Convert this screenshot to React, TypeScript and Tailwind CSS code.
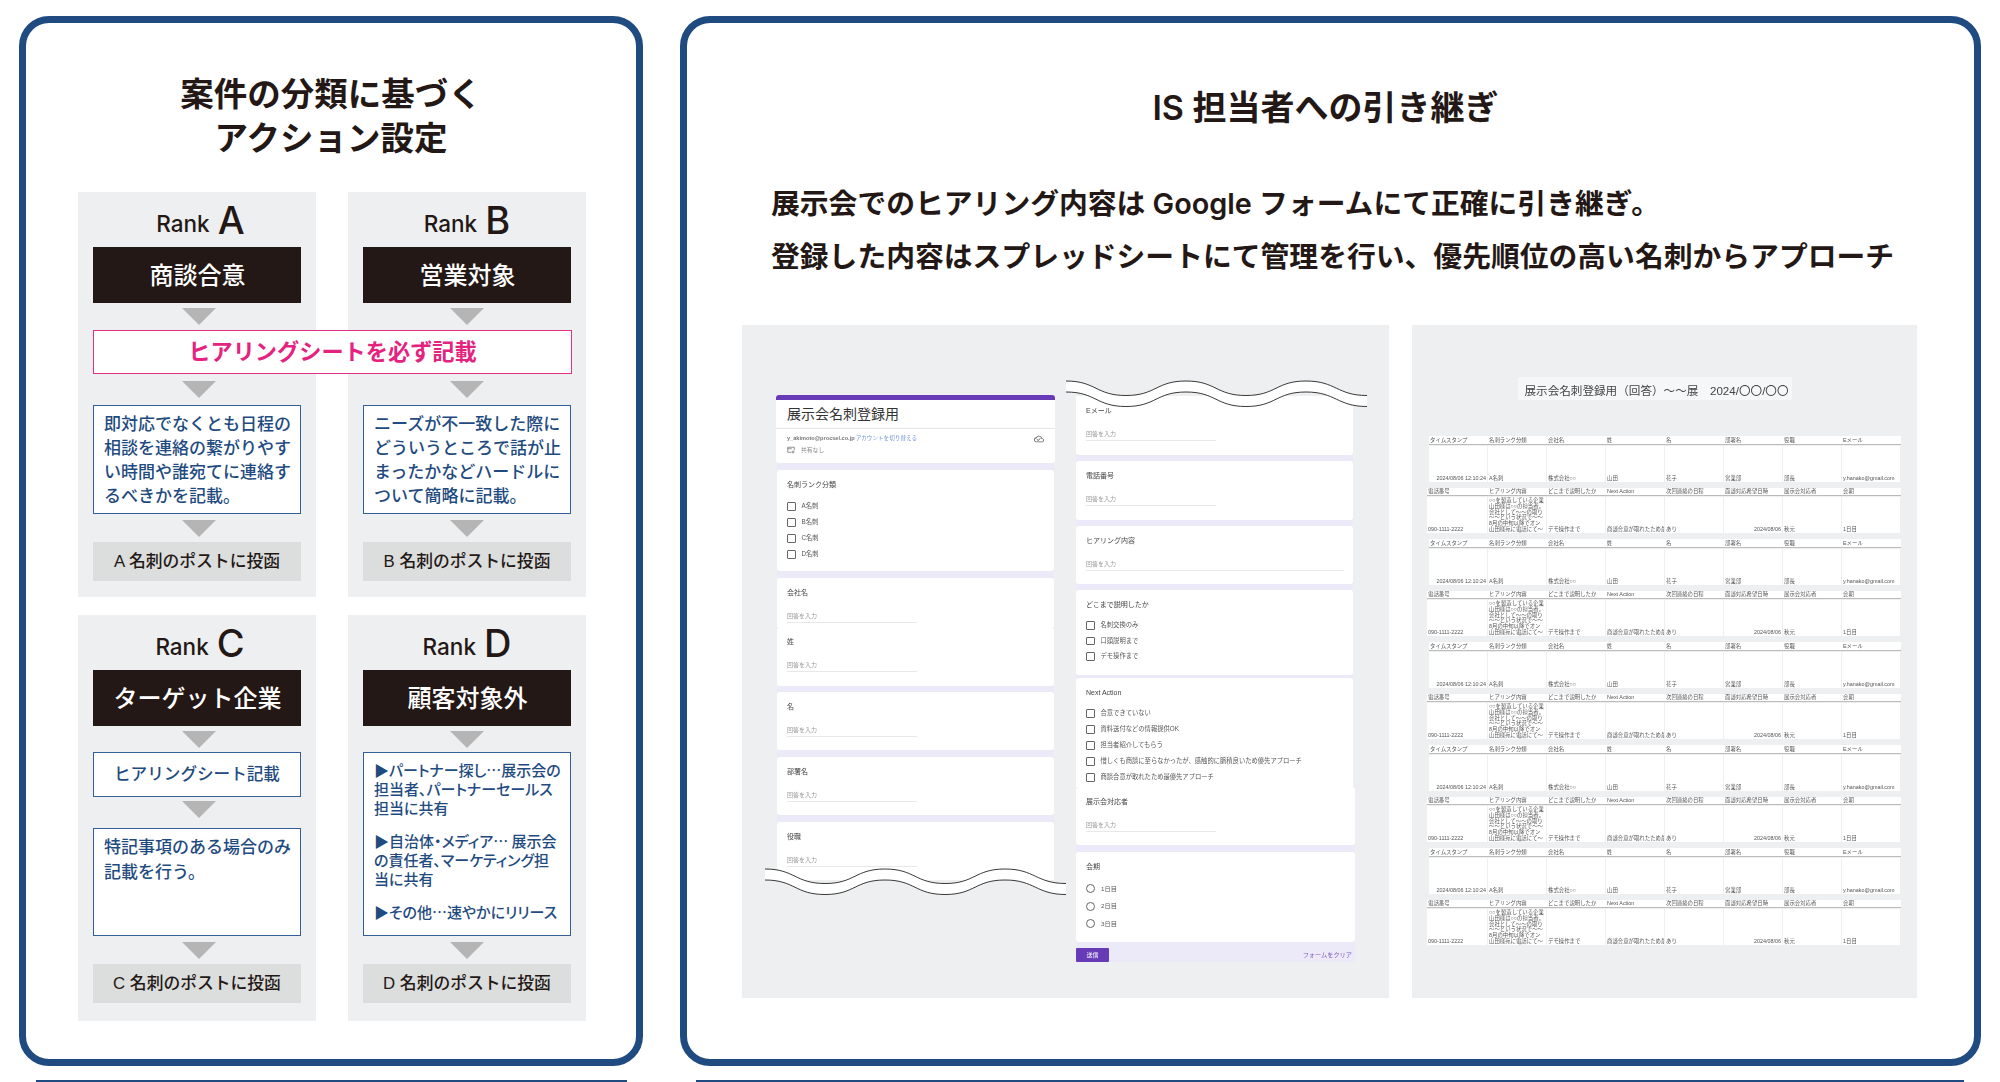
import React from "react"

const FONT = "font-['Liberation_Sans','Noto_Sans_CJK_JP',sans-serif]"

const Arrow = ({ className }: { className: string }) => (
  <div className={`flex justify-center ${className}`}>
    <div className="w-0 h-0 border-x-[17px] border-x-transparent border-t-[17px] border-t-[#b5b5b6]" />
  </div>
)

const RankLabel = ({ rank, className }: { rank: string; className: string }) => (
  <div className={`h-[55px] pt-[6px] flex items-baseline justify-center text-[#231815] font-medium font-['Inter',sans-serif] ${className}`}>
    <span className="text-[22.5px] leading-[44px] -translate-y-[2.5px]">Rank</span>
    <span className="text-[38px] leading-[44px] ml-[8px]">{rank}</span>
  </div>
)

const BlackBox = ({ children }: { children: React.ReactNode }) => (
  <div className="h-[56px] pt-[1px] pl-[1px] bg-[#231815] text-white text-[24px] font-medium flex items-center justify-center">
    {children}
  </div>
)

const GrayBox = ({ children }: { children: React.ReactNode }) => (
  <div className="h-[39px] bg-[#dcdddd] text-[#231815] text-[16.8px] font-medium flex items-center justify-center">
    {children}
  </div>
)

const BlueBox = ({ className, children }: { className: string; children: React.ReactNode }) => (
  <div className={`border-[1.5px] border-[#33609b] bg-white text-[#1f4b80] font-medium whitespace-nowrap ${className}`}>
    {children}
  </div>
)

const LeftCard = () => (
  <div className="w-[624px] h-[1050px] border-[7px] border-[#1f4b80] rounded-[30px] bg-white">
    <h2 className="pt-[50px] text-center text-[33.5px] leading-[44px] font-semibold text-[#231815]">
      案件の分類に基づく
      <br />
      アクション設定
    </h2>
    <div className="mt-[31px] ml-[52px] grid grid-cols-[238px_238px] grid-rows-[405px_406px] gap-x-[32px] gap-y-[18px]">
      <div className="bg-[#eeeff0] px-[15px]">
        <RankLabel rank="A" className="pl-[7px]" />
        <BlackBox>商談合意</BlackBox>
        <Arrow className="mt-[5px] pl-[4px]" />
        <div className="relative z-10 mt-[5px] w-[479px] h-[44px] pt-[1px] border-[1.5px] border-[#e0308a] bg-white text-[#e4237f] text-[22.2px] font-bold flex items-center justify-center">
          ヒアリングシートを必ず記載
        </div>
        <Arrow className="mt-[7px] pl-[4px]" />
        <BlueBox className="mt-[7px] h-[109px] px-[10px] pt-[6.5px] text-[17px] leading-[24px]">
          即対応でなくとも日程の
          <br />
          相談を連絡の繋がりやす
          <br />
          い時間や誰宛てに連絡す
          <br />
          るべきかを記載。
        </BlueBox>
        <Arrow className="mt-[6px] pl-[4px]" />
        <div className="mt-[5px]">
          <GrayBox>A 名刺のポストに投函</GrayBox>
        </div>
      </div>

      <div className="bg-[#eeeff0] px-[15px]">
        <RankLabel rank="B" className="" />
        <BlackBox>営業対象</BlackBox>
        <Arrow className="mt-[5px]" />
        <div className="mt-[5px] h-[44px]" />
        <Arrow className="mt-[7px]" />
        <BlueBox className="mt-[7px] h-[109px] px-[10px] pt-[6.5px] text-[17px] leading-[24px]">
          ニーズが不一致した際に
          <br />
          どういうところで話が止
          <br />
          まったかなどハードルに
          <br />
          ついて簡略に記載。
        </BlueBox>
        <Arrow className="mt-[6px]" />
        <div className="mt-[5px]">
          <GrayBox>B 名刺のポストに投函</GrayBox>
        </div>
      </div>

      <div className="bg-[#eeeff0] px-[15px]">
        <RankLabel rank="C" className="pl-[6px]" />
        <BlackBox>ターゲット企業</BlackBox>
        <Arrow className="mt-[5px] pl-[4px]" />
        <BlueBox className="mt-[4px] h-[45px] pt-[1px] flex items-center justify-center text-[16.6px]">ヒアリングシート記載</BlueBox>
        <Arrow className="mt-[4px] pl-[4px]" />
        <BlueBox className="mt-[10px] h-[108px] px-[10px] pt-[5.5px] text-[17px] leading-[25px]">
          特記事項のある場合のみ
          <br />
          記載を行う。
        </BlueBox>
        <Arrow className="mt-[6px] pl-[4px]" />
        <div className="mt-[5px]">
          <GrayBox>C 名刺のポストに投函</GrayBox>
        </div>
      </div>

      <div className="bg-[#eeeff0] px-[15px]">
        <RankLabel rank="D" className="" />
        <BlackBox>顧客対象外</BlackBox>
        <Arrow className="mt-[5px]" />
        <BlueBox className="mt-[4px] h-[184px] px-[10px] pt-[6.5px] text-[15px] leading-[19.3px] font-['Noto_Sans_CJK_JP',sans-serif] [font-feature-settings:'palt']">
          ▶パートナー探し…展示会の
          <br />
          担当者、パートナーセールス
          <br />
          担当に共有
          <div className="mt-[13.5px]">
            ▶自治体・メディア… 展示会
            <br />
            の責任者、マーケティング担
            <br />
            当に共有
          </div>
          <div className="mt-[13.5px]">▶その他…速やかにリリース</div>
        </BlueBox>
        <Arrow className="mt-[6px]" />
        <div className="mt-[5px]">
          <GrayBox>D 名刺のポストに投函</GrayBox>
        </div>
      </div>
    </div>
  </div>
)

const Wave = ({ className }: { className: string }) => (
  <svg className={`absolute ${className}`} width="301" height="28" viewBox="0 0 301 28" fill="none">
    <path
      d="M0 1C30 1 30 15.5 60 15.5S90 1 120 1s30 14.5 60 14.5S210 1 240 1s31 14.5 61 14.5V26.5C271 26.5 270 12 240 12s-30 14.5-60 14.5S150 12 120 12 90 26.5 60 26.5 30 12 0 12Z"
      fill="#ffffff"
      stroke="none"
    />
    <path d="M0 1C30 1 30 15.5 60 15.5S90 1 120 1s30 14.5 60 14.5S210 1 240 1s31 14.5 61 14.5" stroke="#222" strokeWidth="0.9" />
    <path d="M0 12C30 12 30 26.5 60 26.5S90 12 120 12s30 14.5 60 14.5S210 12 240 12s31 14.5 61 14.5" stroke="#222" strokeWidth="0.9" />
  </svg>
)

const FormText = ({ wide, label }: { wide?: boolean; label: string }) => (
  <div>
    <div className="text-[7px] leading-[8px] text-[#444]">{label}</div>
    <div className={`mt-[15px] pb-[2px] text-[6px] leading-[8px] text-[#999] border-b border-[#e8e8e8] ${wide ? "w-[258px]" : "w-[130px]"}`}>
      回答を入力
    </div>
  </div>
)

const Card = ({ className, children }: { className: string; children: React.ReactNode }) => (
  <div className={`bg-white px-[10px] pt-[11px] ${className}`}>{children}</div>
)

const CheckRow = ({ text, className }: { text: string; className: string }) => (
  <div className={`flex items-center ${className}`}>
    <div className="w-[8.5px] h-[8.5px] border border-[#666] rounded-[1px] shrink-0" />
    <span className="ml-[6px] text-[6.3px] leading-[8px] text-[#555] whitespace-nowrap">{text}</span>
  </div>
)

const RadioRow = ({ text, className }: { text: string; className: string }) => (
  <div className={`flex items-center ${className}`}>
    <div className="w-[9px] h-[9px] border border-[#666] rounded-full shrink-0" />
    <span className="ml-[6px] text-[6.2px] leading-[8px] text-[#555]">{text}</span>
  </div>
)

const FormPanel = () => (
  <div className="relative w-[647px] h-[673px] bg-[#eeeff0] flex pl-[34px] gap-[21px]">
    <div className="w-[279px] mt-[70px] h-[485px] flex flex-col blur-[0.25px]">
      <div className="h-[68px] bg-white rounded-[3px]">
        <div className="h-[5px] bg-[#673ab7] rounded-t-[3px]" />
        <div className="h-[29px] pl-[11px] flex items-center border-b border-[#e6e6e6] text-[14px] text-[#333]">展示会名刺登録用</div>
        <div className="relative pl-[11px] pt-[5px] h-[13px] text-[5.6px] leading-[8px] whitespace-nowrap">
          <span className="font-bold text-[#777]">y_akimoto@procsel.co.jp</span>
          <span className="ml-[1px] text-[#6f93dc]">アカウントを切り替える</span>
          <svg className="absolute right-[11px] top-[5px]" width="10" height="10" viewBox="0 0 24 24" fill="#666">
            <path d="M19.35 10.04C18.67 6.59 15.64 4 12 4 9.11 4 6.6 5.64 5.35 8.04 2.34 8.36 0 10.91 0 14c0 3.31 2.69 6 6 6h13c2.76 0 5-2.24 5-5 0-2.64-2.05-4.78-4.65-4.96zM19 18H6c-2.21 0-4-1.79-4-4s1.79-4 4-4h.71C7.37 7.69 9.5 6 12 6c3.04 0 5.5 2.46 5.5 5.5v.5H19c1.66 0 3 1.34 3 3s-1.34 3-3 3zm-9-3.82l-2.09-2.09L6.5 13.5 10 17l6.01-6.01-1.41-1.41z" />
          </svg>
        </div>
        <div className="pl-[11px] mt-[4px] flex items-center text-[5.8px] leading-[8px] text-[#888]">
          <svg width="8" height="8" viewBox="0 0 16 16" fill="none" stroke="#666" strokeWidth="1.4">
            <path d="M1.5 2.5h13v6M1.5 2.5v10h7M1.5 5.5h8" />
            <circle cx="12" cy="12" r="2" />
          </svg>
          <span className="ml-[6px]">共有なし</span>
        </div>
      </div>
      <div className="mx-[1px] bg-[#ece9f8] flex flex-col flex-1">
        <Card className="mt-[7px] h-[101px] rounded-[3px]">
          <div className="text-[7px] leading-[8px] text-[#444]">名刺ランク分類</div>
          <CheckRow text="A名刺" className="mt-[13px]" />
          <CheckRow text="B名刺" className="mt-[7.5px]" />
          <CheckRow text="C名刺" className="mt-[7.5px]" />
          <CheckRow text="D名刺" className="mt-[7.5px]" />
        </Card>
        <Card className="mt-[7px] h-[49px] rounded-t-[3px]">
          <FormText label="会社名" />
        </Card>
        <Card className="h-[59px] rounded-[3px]">
          <FormText label="姓" />
        </Card>
        <Card className="mt-[6px] h-[58px] rounded-[3px]">
          <FormText label="名" />
        </Card>
        <Card className="mt-[7px] h-[58px] rounded-[3px]">
          <FormText label="部署名" />
        </Card>
        <Card className="mt-[7px] h-[58px] rounded-t-[3px]">
          <FormText label="役職" />
        </Card>
      </div>
    </div>

    <div className="w-[279px] mt-[71px] h-[566px] flex flex-col blur-[0.25px]">
      <div className="mr-[2px] bg-[#ece9f8] flex flex-col">
        <Card className="h-[59px] rounded-b-[3px]">
          <FormText label="Eメール" />
        </Card>
        <Card className="mt-[6px] h-[59px] rounded-[3px]">
          <FormText label="電話番号" />
        </Card>
        <Card className="mt-[6px] h-[58px] rounded-[3px]">
          <FormText label="ヒアリング内容" wide />
        </Card>
        <Card className="mt-[6px] h-[85px] rounded-[3px]">
          <div className="text-[7px] leading-[8px] text-[#444]">どこまで説明したか</div>
          <CheckRow text="名刺交換のみ" className="mt-[12px]" />
          <CheckRow text="口頭説明まで" className="mt-[7px]" />
          <CheckRow text="デモ操作まで" className="mt-[7px]" />
        </Card>
        <Card className="mt-[3px] h-[109px] rounded-t-[3px]">
          <div className="text-[7px] leading-[8px] text-[#444]">Next Action</div>
          <CheckRow text="合意できていない" className="mt-[12px]" />
          <CheckRow text="資料送付などの情報提供OK" className="mt-[7.5px]" />
          <CheckRow text="担当者紹介してもらう" className="mt-[7.5px]" />
          <CheckRow text="惜しくも商談に至らなかったが、感触的に脈積良いため優先アプローチ" className="mt-[7.5px]" />
          <CheckRow text="商談合意が取れたため最優先アプローチ" className="mt-[7.5px]" />
        </Card>
      </div>
      <div className="bg-[#ece9f8] flex flex-col flex-1">
        <Card className="h-[58px] rounded-[3px]">
          <FormText label="展示会対応者" />
        </Card>
        <Card className="mt-[7px] h-[90px] rounded-[3px]">
          <div className="text-[7px] leading-[8px] text-[#444]">会期</div>
          <RadioRow text="1日目" className="mt-[13px]" />
          <RadioRow text="2日目" className="mt-[8.5px]" />
          <RadioRow text="3日目" className="mt-[8.5px]" />
        </Card>
        <div className="h-[20px] flex items-end justify-between">
          <div className="w-[33px] h-[14px] rounded-[1px] bg-[#673ab7] text-white text-[6px] flex items-center justify-center">送信</div>
          <div className="mr-[3px] mb-[3px] text-[#7a5fc0] text-[6.2px] leading-[8px]">フォームをクリア</div>
        </div>
      </div>
    </div>

    <Wave className="left-[23px] top-[543px]" />
    <Wave className="left-[324px] top-[55px]" />
  </div>
)

const headA = ["タイムスタンプ", "名刺ランク分類", "会社名", "姓", "名", "部署名", "役職", "Eメール"]
const headB = ["電話番号", "ヒアリング内容", "どこまで説明したか", "Next Action", "次回連絡の日程", "面談対応希望日時", "展示会対応者", "会期"]
const rowA = ["2024/08/06 12:10:24", "A名刺", "株式会社○○", "山田", "花子", "営業部", "部長", "y.hanako@gmail.com"]
const rowB = ["090-1111-2222", "", "デモ操作まで", "商談合意が取れたため最", "あり", "2024/08/06", "秋元", "1日目"]
const hearing = ["○○を製造している企業", "山田様は○○の担当者。", "会社として～～の取り", "～～という状況で～～", "8月の中旬以降でオン", "山田様宛に電話にて～"]

const SheetBlock = ({ kind }: { kind: "a" | "b" }) => {
  const head = kind === "a" ? headA : headB
  const row = kind === "a" ? rowA : rowB
  const cols = kind === "a" ? "ml-[2px] grid-cols-[repeat(8,59px)]" : "grid-cols-[61px_repeat(7,59px)]"
  return (
    <div className="text-[5.4px] leading-[6px] text-[#555]">
      <div className={`grid h-[8.5px] items-center bg-white border-b-[1.5px] border-[#bcbcbc] ${cols}`}>
        {head.map((h) => (
          <div key={h} className="pl-[1px] whitespace-nowrap overflow-hidden">
            {h}
          </div>
        ))}
      </div>
      <div className={`grid mt-[1px] h-[36px] bg-white ${cols}`}>
        {row.map((c, i) => {
          const right = (kind === "a" && i === 0) || (kind === "b" && i === 5)
          return (
            <div key={i} className={`self-stretch px-[1px] border-r border-[#efefef] whitespace-nowrap overflow-hidden ${right ? "text-right" : ""}`}>
              {kind === "b" && i === 1 ? (
                hearing.map((l) => (
                  <div key={l} className="h-[5.8px]">
                    {l}
                  </div>
                ))
              ) : (
                <div className="mt-[29px]">{c}</div>
              )}
            </div>
          )
        })}
      </div>
    </div>
  )
}

const SheetPanel = () => (
  <div className="w-[505px] h-[673px] bg-[#eeeff0] pt-[52px] blur-[0.2px]">
    <div className="ml-[106px] w-[274px] h-[23px] pt-[4px] pl-[3px] bg-[#f6f7f8] flex items-center justify-center text-[11.6px] text-[#444] whitespace-nowrap">
      展示会名刺登録用（回答）～～展　2024/〇〇/〇〇
    </div>
    <div className="mt-[36px] ml-[15px] w-[474px] flex flex-col gap-[6px]">
      {["a", "b", "a", "b", "a", "b", "a", "b", "a", "b"].map((k, i) => (
        <SheetBlock key={i} kind={k as "a" | "b"} />
      ))}
    </div>
  </div>
)

const RightCard = () => (
  <div className="w-[1301px] h-[1050px] border-[7px] border-[#1f4b80] rounded-[30px] bg-white">
    <h2 className="pt-[63px] pr-[10px] text-center text-[34px] leading-[44px] font-semibold text-[#231815] font-['Inter','Noto_Sans_CJK_JP',sans-serif]">
      IS 担当者への引き継ぎ
    </h2>
    <div className="mt-[47px] pl-[84px] text-[28.8px] leading-[53px] font-semibold text-[#231815] whitespace-nowrap font-['Inter','Noto_Sans_CJK_JP',sans-serif]">
      展示会でのヒアリング内容は Google フォームにて正確に引き継ぎ。
      <br />
      登録した内容はスプレッドシートにて管理を行い、優先順位の高い名刺からアプローチ
    </div>
    <div className="mt-[42px] pl-[55px] flex gap-[23px]">
      <FormPanel />
      <SheetPanel />
    </div>
  </div>
)

export default function App() {
  return (
    <div className={`w-[2000px] h-[1082px] overflow-hidden bg-white ${FONT}`}>
      <div className="pt-[16px] pl-[19px] flex gap-[37px]">
        <LeftCard />
        <RightCard />
      </div>
      <div className="mt-[14px] flex">
        <div className="ml-[36px] w-[591px] h-[2px] bg-[#1f4b80]" />
        <div className="ml-[69px] w-[1268px] h-[2px] bg-[#1f4b80]" />
      </div>
    </div>
  )
}
